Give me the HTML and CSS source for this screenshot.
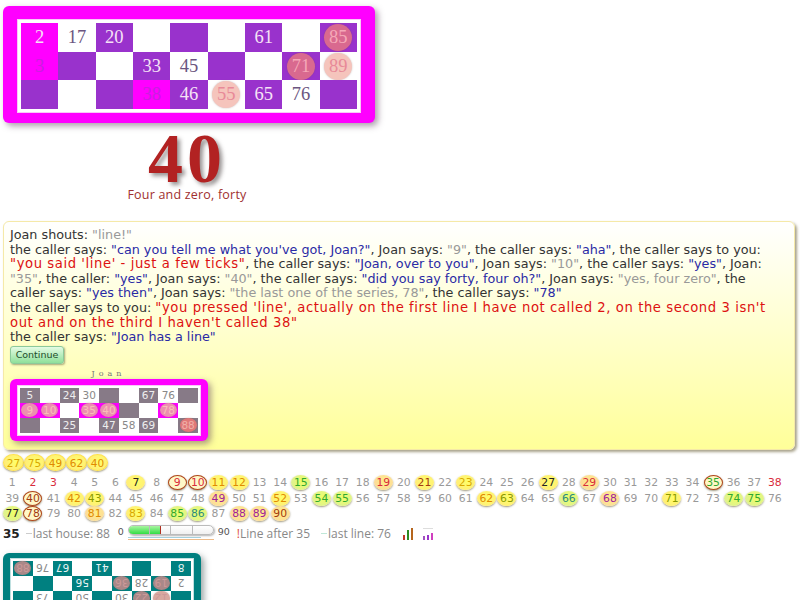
FILE: index.html
```html
<!DOCTYPE html>
<html lang="en">
<head>
  <meta charset="UTF-8">
  <title>Tombola</title>
  <link rel="stylesheet" href="styles.css">
</head>
<body>
  <!-- Player card -->
  <div class="card card-main">
    <div class="cells">
      <div class="cell hit">2</div><div class="cell">17</div><div class="cell dark">20</div><div class="cell"></div><div class="cell dark"></div><div class="cell"></div><div class="cell dark">61</div><div class="cell"></div><div class="cell dark"><span class="mark">85</span></div>
      <div class="cell hit faint">3</div><div class="cell dark"></div><div class="cell"></div><div class="cell dark">33</div><div class="cell">45</div><div class="cell dark"></div><div class="cell"></div><div class="cell dark"><span class="mark">71</span></div><div class="cell"><span class="mark">89</span></div>
      <div class="cell dark"></div><div class="cell"></div><div class="cell dark"></div><div class="cell hit faint">38</div><div class="cell dark">46</div><div class="cell"><span class="mark">55</span></div><div class="cell dark">65</div><div class="cell">76</div><div class="cell dark"></div>
    </div>
  </div>

  <!-- Called number -->
  <div class="called">
    <div class="called-num">40</div>
    <div class="called-words">Four and zero, forty</div>
  </div>

  <!-- Message panel -->
  <div class="panel">
    <div class="msg">Joan shouts: <span class="joan">"line!"</span></div>
    <div class="msg">the caller says: <span class="caller">"can you tell me what you've got, Joan?"</span>, Joan says: <span class="joan">"9"</span>, the caller says: <span class="caller">"aha"</span>, the caller says to you: <span class="you">"you said 'line' - just a few ticks"</span>, the caller says: <span class="caller">"Joan, over to you"</span>, Joan says: <span class="joan">"10"</span>, the caller says: <span class="caller">"yes"</span>, Joan: <span class="joan">"35"</span>, the caller: <span class="caller">"yes"</span>, Joan says: <span class="joan">"40"</span>, the caller says: <span class="caller">"did you say forty, four oh?"</span>, Joan says: <span class="joan">"yes, four zero"</span>, the caller says: <span class="caller">"yes then"</span>, Joan says: <span class="joan">"the last one of the series, 78"</span>, the caller says: <span class="caller">"78"</span></div>
    <div class="msg">the caller says to you: <span class="you">"you pressed 'line', actually on the first line I have not called 2, on the second 3 isn't out and on the third I haven't called 38"</span></div>
    <div class="msg">the caller says: <span class="caller">"Joan has a line"</span></div>
    <button class="continue">Continue</button>
    <div class="player-name">Joan</div>
    <div class="card card-small">
      <div class="cells">
        <div class="cell dark">5</div><div class="cell"></div><div class="cell dark">24</div><div class="cell">30</div><div class="cell dark"></div><div class="cell"></div><div class="cell dark">67</div><div class="cell">76</div><div class="cell dark"></div>
        <div class="cell hit"><span class="mark">9</span></div><div class="cell hit"><span class="mark">10</span></div><div class="cell"></div><div class="cell hit"><span class="mark">35</span></div><div class="cell hit"><span class="mark">40</span></div><div class="cell dark"></div><div class="cell"></div><div class="cell hit"><span class="mark">78</span></div><div class="cell"></div>
        <div class="cell dark"></div><div class="cell"></div><div class="cell dark">25</div><div class="cell"></div><div class="cell dark">47</div><div class="cell">58</div><div class="cell dark">69</div><div class="cell"></div><div class="cell dark"><span class="mark">88</span></div>
      </div>
    </div>
  </div>

  <!-- Last numbers -->
  <div class="recent">
    <span class="ball b-y t-yel">27</span><span class="ball b-y t-yel">75</span><span class="ball b-y t-org">49</span><span class="ball b-y t-org">62</span><span class="ball b-y t-org">40</span>
  </div>

  <!-- All numbers -->
  <div class="board">
    <span class="n">1</span><span class="n t-red">2</span><span class="n t-red">3</span><span class="n">4</span><span class="n">5</span><span class="n">6</span><span class="n ball b-y t-dark">7</span><span class="n">8</span><span class="n ball ring t-red">9</span><span class="n ball ring t-red">10</span><span class="n ball b-y t-org">11</span><span class="n ball b-y t-org">12</span><span class="n">13</span><span class="n">14</span><span class="n ball b-g t-grn">15</span><span class="n">16</span><span class="n">17</span><span class="n">18</span><span class="n ball b-o t-red">19</span><span class="n">20</span><span class="n ball b-y t-brn">21</span><span class="n">22</span><span class="n ball b-y t-yel">23</span><span class="n">24</span><span class="n">25</span><span class="n">26</span><span class="n ball b-y t-dark">27</span><span class="n">28</span><span class="n ball b-o t-red">29</span><span class="n">30</span><span class="n">31</span><span class="n">32</span><span class="n">33</span><span class="n">34</span><span class="n ball ring t-grn">35</span><span class="n">36</span><span class="n">37</span><span class="n t-red">38</span>
    <span class="n">39</span><span class="n ball ring t-brn">40</span><span class="n">41</span><span class="n ball b-y t-org">42</span><span class="n ball b-y t-olv">43</span><span class="n">44</span><span class="n">45</span><span class="n">46</span><span class="n">47</span><span class="n">48</span><span class="n ball b-o t-pur">49</span><span class="n">50</span><span class="n">51</span><span class="n ball b-y t-org">52</span><span class="n">53</span><span class="n ball b-g t-grn">54</span><span class="n ball b-g t-grn">55</span><span class="n">56</span><span class="n">57</span><span class="n">58</span><span class="n">59</span><span class="n">60</span><span class="n">61</span><span class="n ball b-y t-org">62</span><span class="n ball b-y t-olv">63</span><span class="n">64</span><span class="n">65</span><span class="n ball b-g t-teal">66</span><span class="n">67</span><span class="n ball b-o t-pur">68</span><span class="n">69</span><span class="n">70</span><span class="n ball b-y t-olv">71</span><span class="n">72</span><span class="n">73</span><span class="n ball b-g t-grn">74</span><span class="n ball b-g t-grn">75</span><span class="n">76</span>
    <span class="n ball b-g t-dark">77</span><span class="n ball ring t-brn">78</span><span class="n">79</span><span class="n">80</span><span class="n ball b-o t-org">81</span><span class="n">82</span><span class="n ball b-y t-yel">83</span><span class="n">84</span><span class="n ball b-g t-grn">85</span><span class="n ball b-g t-teal">86</span><span class="n">87</span><span class="n ball b-o t-pur">88</span><span class="n ball b-o t-pur">89</span><span class="n ball b-o t-brn">90</span>
  </div>

  <!-- Status row -->
  <div class="status">
    <span class="cur">35</span>
    <span class="dash"></span><span class="stat stat-house">last house: 88</span>
    <div class="meter">
      <span class="meter-end">0</span>
      <div class="meter-col">
        <div class="bar">
          <div class="bar-fill"></div>
          <div class="tick tick-a"></div><div class="tick tick-b"></div><div class="tick tick-c"></div>
        </div>
        <div class="under under-blue"></div>
        <div class="under under-orange"></div>
      </div>
      <span class="meter-end">90</span>
    </div>
    <span class="stat stat-after"><span class="bang">!</span>Line after 35</span>
    <span class="dash dash-green"></span><span class="stat">last line: 76</span>
    <svg class="chart" width="10" height="12" viewBox="0 0 10 12"><rect x="0" y="7" width="2" height="5" fill="#c0392b"/><rect x="4" y="2" width="2" height="10" fill="#2e8b22"/><rect x="8" y="0" width="2" height="12" fill="#b5651d"/></svg>
    <svg class="chart chart-2" width="10" height="12" viewBox="0 0 10 12"><rect x="0" y="0" width="10" height="1" fill="#ddd"/><rect x="0" y="8" width="2" height="4" fill="#a050c0"/><rect x="4" y="7" width="2" height="5" fill="#9932cc"/><rect x="8" y="5" width="2" height="7" fill="#d040c0"/></svg>
  </div>

  <!-- Opponent card, seen from the other side of the table -->
  <div class="card card-small card-flip">
    <div class="cells">
      <div class="cell dark"></div><div class="cell"><span class="mark">12</span></div><div class="cell dark"><span class="mark">22</span></div><div class="cell">30</div><div class="cell dark"></div><div class="cell">50</div><div class="cell dark"></div><div class="cell">73</div><div class="cell dark"></div>
      <div class="cell">2</div><div class="cell dark"><span class="mark">19</span></div><div class="cell">28</div><div class="cell dark"><span class="mark">36</span></div><div class="cell"></div><div class="cell dark">56</div><div class="cell"></div><div class="cell dark"></div><div class="cell"></div>
      <div class="cell dark">8</div><div class="cell"></div><div class="cell dark"></div><div class="cell"></div><div class="cell dark">41</div><div class="cell"></div><div class="cell dark">67</div><div class="cell">76</div><div class="cell dark"><span class="mark">88</span></div>
    </div>
  </div>
</body>
</html>
```

FILE: styles.css
```css
html, body {
  height: 600px;
  overflow: hidden;
}

body {
  margin: 0;
  background-color: #fff;
  color: #333;
  font-family: "DejaVu Sans", Verdana, sans-serif;
  font-size: 12.75px;
}

/* Cards */
.card {
  background-color: #ff00ff;
  border-radius: 6px;
  box-shadow: 3px 3px 6px rgba(90, 60, 90, 0.5);
  box-sizing: border-box;
}

.cells {
  display: grid;
  grid-template-columns: repeat(9, 1fr);
  border: 1px solid #fff;
  padding: 2px;
  background-color: #fff;
  outline: 1px solid #f8c8f8;
}

.cell {
  display: flex;
  align-items: center;
  justify-content: center;
  background-color: #fff;
  color: #6b5580;
  font-family: "Liberation Serif", serif;
}

.cell.dark {
  background-color: #9932cc;
  color: #f6e2f6;
}

.cell.hit {
  background-color: #ff00ff;
  color: #f6e2f6;
}

.cell.faint {
  color: #c81fe0;
}

.mark {
  display: flex;
  align-items: center;
  justify-content: center;
  background-color: #f5c4bc;
  color: #e88a98;
  border-radius: 50%;
  box-shadow: 0 0 2px rgba(120, 80, 80, 0.4);
}

.dark .mark {
  background-color: #d9698f;
  color: #f5a8b8;
}

.card-main {
  width: 372px;
  height: 117px;
  margin: 6px 0 0 3px;
  padding: 14px 15px;
}

.card-main .cell {
  height: 28.7px;
  font-size: 18.5px;
}

.card-main .mark {
  width: 28px;
  height: 27px;
}

.card-small {
  width: 198px;
  height: 62px;
  padding: 7px 8px;
}

.card-small .cells {
  padding: 1px;
}

.card-small .cell {
  height: 15px;
  font-size: 10.5px;
  font-family: "DejaVu Sans", sans-serif;
}

.card-small .cell.dark {
  background-color: #877a87;
  color: #eee;
}

.card-small .cell:not(.dark):not(.hit) {
  color: #888;
}

.card-small .mark {
  width: 17px;
  height: 14px;
}

.card-small .cell.hit .mark {
  background-color: #ec8fb0;
  color: #f8c0b8;
}

.card-small .cell.dark .mark {
  background-color: #e07878;
  color: #f0b0a8;
}

/* Called number */
.called {
  width: 368px;
  margin: 9px 0 0 3px;
  text-align: center;
}

.called-num {
  font-family: "Liberation Serif", serif;
  font-weight: bold;
  font-size: 70px;
  letter-spacing: 4px;
  line-height: 54px;
  color: #b22222;
  text-shadow: 3px 3px 4px rgba(70, 60, 60, 0.55);
}

.called-words {
  margin-top: 1px;
  font-family: "Open Sans", sans-serif;
  font-size: 12.5px;
  letter-spacing: 0.2px;
  line-height: 16px;
  color: #a03030;
}

/* Messages */
.panel {
  width: 792px;
  height: 229px;
  box-sizing: border-box;
  margin: 18px 0 0 3px;
  padding: 6px 10px 6px 6px;
  background: linear-gradient(#fff, #ffff99);
  border: 1px solid #f5e9a8;
  border-radius: 6px;
  box-shadow: 2px 2px 3px rgba(110, 100, 60, 0.6);
}

.msg {
  line-height: 14.6px;
}

.joan {
  color: #999;
}

.caller {
  color: #2a2aa5;
}

.you {
  color: #dd1111;
  font-size: 13.2px;
  letter-spacing: 0.57px;
}

.continue {
  display: block;
  width: 54px;
  height: 18px;
  margin-top: 1px;
  padding: 0;
  background: linear-gradient(#e4fbe4, #8fe09a);
  border: 1px solid #8cc99a;
  border-radius: 3px;
  box-shadow: 1px 1px 2px rgba(80, 80, 50, 0.5);
  color: #1d4d2a;
  font-family: "DejaVu Sans", sans-serif;
  font-size: 9.5px;
}

.player-name {
  width: 197px;
  margin-top: 5px;
  text-align: center;
  font-family: "DejaVu Serif", serif;
  font-size: 8px;
  letter-spacing: 4px;
  line-height: 10px;
  color: #777;
}

/* Recent balls */
.recent {
  display: flex;
  margin: 4px 0 0 3px;
}

.ball {
  display: inline-flex;
  align-items: center;
  justify-content: center;
  width: 19px;
  height: 15px;
  border-radius: 50%;
  box-shadow: 0 1px 2px rgba(90, 80, 40, 0.6);
}

.recent .ball {
  width: 17px;
  height: 15px;
  padding: 0 1px;
  font-size: 10.5px;
  border: 1px solid #ffe24a;
}

.b-y {
  background: radial-gradient(circle at 55% 45%, #ffff66, #ffe680);
}

.b-o {
  background: radial-gradient(circle at 55% 45%, #ffee88, #fbd4a0);
}

.b-g {
  background: radial-gradient(circle at 55% 45%, #eeff66, #d8eca0);
}

.ring {
  background: #fff8c8;
  border: 1.5px solid #b0451a;
  box-sizing: border-box;
}

.t-dark { color: #222; }
.t-red { color: #d92b3c; }
.t-org { color: #e08a00; }
.t-yel { color: #d8a800; }
.t-brn { color: #a33a10; }
.t-grn { color: #2fa82f; }
.t-olv { color: #8a9a00; }
.t-teal { color: #2a8a80; }
.t-pur { color: #a0209a; }

/* Number board */
.board {
  display: grid;
  grid-template-columns: repeat(38, 20.62px);
  grid-auto-rows: 15.5px;
  margin: 4px 0 0 2px;
  color: #999;
  font-size: 10.8px;
}

.n {
  display: flex;
  align-items: center;
  justify-content: center;
}

.n.ball {
  display: flex;
  justify-self: center;
  align-self: center;
}

/* Status row */
.status {
  display: flex;
  align-items: center;
  height: 22px;
  margin: 1px 0 0 3px;
  color: #888;
  font-family: "Open Sans", sans-serif;
  font-size: 12px;
}

.cur {
  color: #222;
  font-family: "DejaVu Sans", sans-serif;
  font-weight: bold;
  font-size: 12px;
}

.dash {
  width: 6px;
  height: 1px;
  margin: 0 1px 0 6px;
  background-color: #ccc;
}

.dash-green {
  background-color: #bfe8d8;
  margin-left: 11px;
}

.stat-house {
  width: 85px;
}

.meter {
  display: flex;
  align-items: flex-start;
  gap: 4px;
  height: 20px;
  padding-top: 3px;
  font-family: "DejaVu Sans", sans-serif;
  font-size: 9.5px;
  color: #555;
}

.meter-end {
  line-height: 13px;
}

.meter-col {
  width: 86px;
}

.bar {
  position: relative;
  height: 8px;
  background: linear-gradient(#fff, #f0f0f0);
  border: 1px solid #bbb;
  border-radius: 5px;
  box-shadow: 1px 1px 2px rgba(0, 0, 0, 0.3);
}

.bar-fill {
  width: 37%;
  height: 100%;
  background: linear-gradient(#a8f5a0, #33dd44);
  border-right: 1px solid #b03020;
  border-radius: 5px 0 0 5px;
}

.tick {
  position: absolute;
  top: 0;
  width: 1px;
  height: 8px;
  background-color: #bbb;
}

.tick-a { left: 24%; }
.tick-b { left: 49%; }
.tick-c { left: 75%; }

.under {
  height: 1px;
}

.under-blue {
  width: 85%;
  margin-top: 2px;
  background-color: #a8d4e0;
}

.under-orange {
  margin-top: 1px;
  background-color: #eebb88;
}

.stat-after {
  margin-left: 7px;
}

.bang {
  color: #e05040;
  font-size: 12px;
}

.chart {
  margin-left: 12px;
}

.chart-2 {
  margin-left: 10px;
}

/* Upside down card */
.card-flip {
  margin: 8px 0 0 3px;
  background-color: #008080;
  box-shadow: -3px -3px 6px rgba(60, 80, 80, 0.5);
  transform: rotate(180deg);
}

.card-flip .cell.dark {
  background-color: #008080;
  color: #e8f4f4;
}

.card-flip .cells {
  outline-color: #bfe0e0;
}

.card-flip .cell.dark .mark {
  background-color: #a88;
  color: #c99;
}

.card-flip .mark {
  background-color: #d8a8a0;
  color: #c99;
}
```
